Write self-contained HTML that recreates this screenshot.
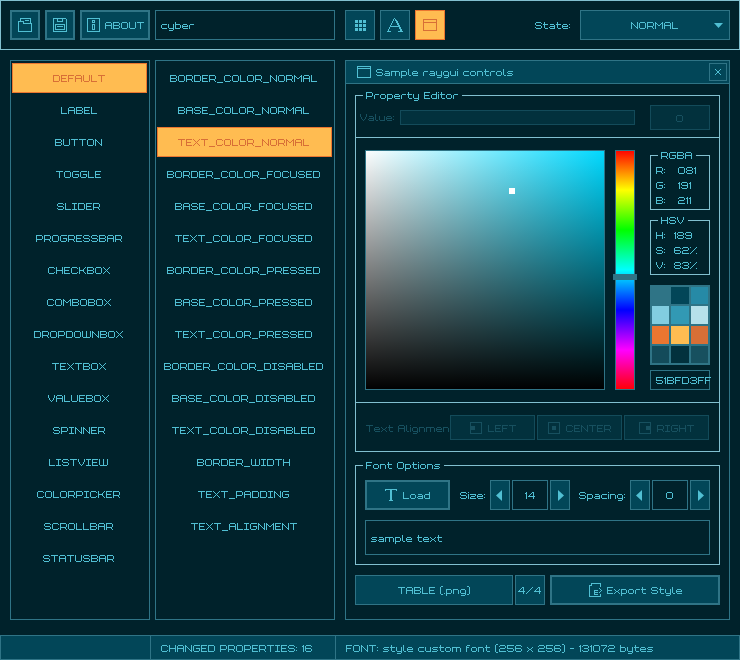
<!DOCTYPE html>
<html><head><meta charset="utf-8"><style>
html,body{margin:0;padding:0;width:740px;height:660px;overflow:hidden;background:#00222b}
div,span{position:absolute;box-sizing:border-box}
</style></head><body>
<div style="left:0px;top:0px;width:740px;height:50px;border:1px solid #81c0d0;background:#00222b;"></div>
<div style="left:10px;top:10px;width:30px;height:30px;border:2px solid #2f7486;background:#024658;"></div>
<div style="left:45px;top:10px;width:30px;height:30px;border:2px solid #2f7486;background:#024658;"></div>
<div style="left:80px;top:10px;width:70px;height:30px;border:2px solid #2f7486;background:#024658;"></div>
<div style="left:155px;top:10px;width:180px;height:30px;border:1px solid #2f7486;background:#00222b;"></div>
<div style="left:345px;top:10px;width:30px;height:30px;border:1px solid #2f7486;background:#024658;"></div>
<div style="left:380px;top:10px;width:30px;height:30px;border:1px solid #2f7486;background:#024658;"></div>
<div style="left:415px;top:10px;width:30px;height:30px;border:1px solid #eb7630;background:#ffbc51;"></div>
<div style="left:580px;top:10px;width:150px;height:30px;border:1px solid #2f7486;background:#024658;"></div>
<div style="left:10px;top:60px;width:140px;height:560px;border:1px solid #2f7486;background:#00222b;"></div>
<div style="left:155px;top:60px;width:180px;height:560px;border:1px solid #2f7486;background:#00222b;"></div>
<div style="left:12px;top:63px;width:135px;height:30px;border:1px solid #eb7630;background:#ffbc51;"></div>
<div style="left:157px;top:127px;width:175px;height:30px;border:1px solid #eb7630;background:#ffbc51;"></div>
<div style="left:345px;top:60px;width:385px;height:560px;border:1px solid #2f7486;background:#00222b;"></div>
<div style="left:345px;top:60px;width:385px;height:24px;border:1px solid #2f7486;background:#024658;"></div>
<div style="left:709px;top:63px;width:18px;height:18px;border:1px solid #2f7486;background:#024658;"></div>
<div style="left:355px;top:95px;width:8px;height:1px;background:#81c0d0"></div>
<div style="left:462px;top:95px;width:258px;height:1px;background:#81c0d0"></div>
<div style="left:355px;top:95px;width:1px;height:357px;background:#81c0d0"></div>
<div style="left:719px;top:95px;width:1px;height:357px;background:#81c0d0"></div>
<div style="left:355px;top:451px;width:365px;height:1px;background:#81c0d0"></div>
<div style="left:400px;top:110px;width:235px;height:15px;border:1px solid #134b5a;background:#02313d;"></div>
<div style="left:650px;top:105px;width:60px;height:25px;border:1px solid #134b5a;background:#02313d;"></div>
<div style="left:355px;top:137px;width:365px;height:1px;background:#81c0d0"></div>
<div style="left:365px;top:150px;width:240px;height:240px;background:linear-gradient(to bottom,rgba(0,0,0,0),#000),linear-gradient(to right,#fff,rgb(0,217,255))"></div>
<div style="left:365px;top:150px;width:240px;height:240px;border:1px solid #2f7486;background:transparent;"></div>
<div style="left:509px;top:188px;width:6px;height:6px;background:#fff"></div>
<div style="left:615px;top:150px;width:20px;height:240px;background:linear-gradient(to bottom,#f00,#ff0 16.667%,#0f0 33.333%,#0ff 50%,#00f 66.667%,#f0f 83.333%,#f00)"></div>
<div style="left:615px;top:150px;width:20px;height:240px;border:1px solid #2f7486;background:transparent;"></div>
<div style="left:613px;top:274px;width:24px;height:6px;background:#2f7486"></div>
<div style="left:650px;top:155px;width:8px;height:1px;background:#81c0d0"></div>
<div style="left:696px;top:155px;width:14px;height:1px;background:#81c0d0"></div>
<div style="left:650px;top:155px;width:1px;height:55px;background:#81c0d0"></div>
<div style="left:709px;top:155px;width:1px;height:55px;background:#81c0d0"></div>
<div style="left:650px;top:209px;width:60px;height:1px;background:#81c0d0"></div>
<div style="left:650px;top:220px;width:8px;height:1px;background:#81c0d0"></div>
<div style="left:688px;top:220px;width:22px;height:1px;background:#81c0d0"></div>
<div style="left:650px;top:220px;width:1px;height:55px;background:#81c0d0"></div>
<div style="left:709px;top:220px;width:1px;height:55px;background:#81c0d0"></div>
<div style="left:650px;top:274px;width:60px;height:1px;background:#81c0d0"></div>
<div style="left:650px;top:285px;width:60px;height:80px;background:#2f7486"></div>
<div style="left:652px;top:287px;width:17px;height:17px;background:#2f7486"></div>
<div style="left:671px;top:287px;width:18px;height:17px;background:#024658"></div>
<div style="left:691px;top:287px;width:17px;height:17px;background:#268aa6"></div>
<div style="left:652px;top:306px;width:17px;height:18px;background:#82cde0"></div>
<div style="left:671px;top:306px;width:18px;height:18px;background:#3299b4"></div>
<div style="left:691px;top:306px;width:17px;height:18px;background:#b6e1ea"></div>
<div style="left:652px;top:326px;width:17px;height:18px;background:#eb7630"></div>
<div style="left:671px;top:326px;width:18px;height:18px;background:#ffbc51"></div>
<div style="left:691px;top:326px;width:17px;height:18px;background:#d86f36"></div>
<div style="left:652px;top:346px;width:17px;height:17px;background:#134b5a"></div>
<div style="left:671px;top:346px;width:18px;height:17px;background:#02313d"></div>
<div style="left:691px;top:346px;width:17px;height:17px;background:#17505f"></div>
<div style="left:650px;top:370px;width:60px;height:20px;border:1px solid #2f7486;background:#00222b;"></div>
<div style="left:355px;top:402px;width:365px;height:1px;background:#81c0d0"></div>
<div style="left:450px;top:415px;width:85px;height:25px;border:1px solid #134b5a;background:#02313d;"></div>
<div style="left:537px;top:415px;width:85px;height:25px;border:1px solid #134b5a;background:#02313d;"></div>
<div style="left:624px;top:415px;width:85px;height:25px;border:1px solid #134b5a;background:#02313d;"></div>
<div style="left:355px;top:465px;width:8px;height:1px;background:#81c0d0"></div>
<div style="left:444px;top:465px;width:276px;height:1px;background:#81c0d0"></div>
<div style="left:355px;top:465px;width:1px;height:100px;background:#81c0d0"></div>
<div style="left:719px;top:465px;width:1px;height:100px;background:#81c0d0"></div>
<div style="left:355px;top:564px;width:365px;height:1px;background:#81c0d0"></div>
<div style="left:365px;top:480px;width:85px;height:30px;border:2px solid #2f7486;background:#024658;"></div>
<div style="left:490px;top:480px;width:20px;height:30px;border:1px solid #2f7486;background:#024658;"></div>
<div style="left:512px;top:480px;width:36px;height:30px;border:1px solid #2f7486;background:#00222b;"></div>
<div style="left:550px;top:480px;width:20px;height:30px;border:1px solid #2f7486;background:#024658;"></div>
<div style="left:630px;top:480px;width:20px;height:30px;border:1px solid #2f7486;background:#024658;"></div>
<div style="left:652px;top:480px;width:36px;height:30px;border:1px solid #2f7486;background:#00222b;"></div>
<div style="left:690px;top:480px;width:20px;height:30px;border:1px solid #2f7486;background:#024658;"></div>
<div style="left:365px;top:520px;width:345px;height:35px;border:1px solid #2f7486;background:#00222b;"></div>
<div style="left:355px;top:575px;width:158px;height:30px;border:1px solid #2f7486;background:#024658;"></div>
<div style="left:515px;top:575px;width:30px;height:30px;border:1px solid #2f7486;background:#024658;"></div>
<div style="left:550px;top:575px;width:170px;height:30px;border:2px solid #2f7486;background:#024658;"></div>
<div style="left:0px;top:635px;width:151px;height:25px;border:1px solid #2f7486;background:#024658;"></div>
<div style="left:150px;top:635px;width:186px;height:25px;border:1px solid #2f7486;background:#024658;"></div>
<div style="left:335px;top:635px;width:405px;height:25px;border:1px solid #2f7486;background:#024658;"></div>
<svg style="position:absolute;left:10px;top:10px" width="30" height="30" viewBox="0 0 30 30" shape-rendering="crispEdges" fill="#51bfd3"><rect x="10" y="8" width="11" height="1"/><rect x="10" y="8" width="1" height="4"/><rect x="20" y="8" width="1" height="6"/><rect x="15" y="10" width="4" height="1"/><rect x="8" y="11" width="6" height="1"/><rect x="13" y="11" width="1" height="3"/><rect x="13" y="13" width="9" height="1"/><rect x="21" y="13" width="1" height="9"/><rect x="8" y="21" width="14" height="1"/><rect x="8" y="11" width="1" height="11"/></svg>
<svg style="position:absolute;left:45px;top:10px" width="30" height="30" viewBox="0 0 30 30" shape-rendering="crispEdges" fill="#51bfd3"><rect x="8" y="8" width="13" height="1"/><rect x="21" y="9" width="1" height="1"/><rect x="21" y="9" width="1" height="13"/><rect x="8" y="8" width="1" height="14"/><rect x="8" y="21" width="14" height="1"/><rect x="12" y="8" width="1" height="4"/><rect x="17" y="8" width="1" height="4"/><rect x="12" y="11" width="6" height="1"/><rect x="10" y="14" width="10" height="1"/><rect x="10" y="19" width="10" height="1"/><rect x="10" y="14" width="1" height="6"/><rect x="19" y="14" width="1" height="6"/><rect x="12" y="16" width="6" height="1"/></svg>
<svg style="position:absolute;left:80px;top:10px" width="30" height="30" viewBox="0 0 30 30" shape-rendering="crispEdges" fill="#51bfd3"><rect x="7" y="8" width="13" height="1"/><rect x="7" y="21" width="13" height="1"/><rect x="7" y="8" width="1" height="14"/><rect x="19" y="8" width="1" height="14"/><rect x="12" y="10" width="3" height="1"/><rect x="12" y="12" width="3" height="1"/><rect x="12" y="10" width="1" height="3"/><rect x="14" y="10" width="1" height="3"/><rect x="12" y="14" width="3" height="1"/><rect x="12" y="19" width="3" height="1"/><rect x="12" y="14" width="1" height="6"/><rect x="14" y="14" width="1" height="6"/></svg>
<svg style="position:absolute;left:345px;top:10px" width="30" height="30" viewBox="0 0 30 30" shape-rendering="crispEdges" fill="#51bfd3"><rect x="10" y="10" width="3" height="3"/><rect x="10" y="14" width="3" height="3"/><rect x="10" y="18" width="3" height="3"/><rect x="14" y="10" width="3" height="3"/><rect x="14" y="14" width="3" height="3"/><rect x="14" y="18" width="3" height="3"/><rect x="18" y="10" width="3" height="3"/><rect x="18" y="14" width="3" height="3"/><rect x="18" y="18" width="3" height="3"/></svg>
<svg style="position:absolute;left:380px;top:10px" width="30" height="30" viewBox="0 0 30 30" shape-rendering="crispEdges" fill="#51bfd3"><rect x="14" y="8" width="1" height="1"/><rect x="14" y="8" width="1" height="1"/><rect x="13" y="9" width="1" height="1"/><rect x="15" y="9" width="1" height="1"/><rect x="13" y="10" width="1" height="1"/><rect x="15" y="10" width="2" height="1"/><rect x="12" y="11" width="1" height="1"/><rect x="16" y="11" width="2" height="1"/><rect x="12" y="12" width="1" height="1"/><rect x="16" y="12" width="2" height="1"/><rect x="11" y="13" width="1" height="1"/><rect x="17" y="13" width="2" height="1"/><rect x="11" y="14" width="1" height="1"/><rect x="17" y="14" width="2" height="1"/><rect x="10" y="15" width="1" height="1"/><rect x="18" y="15" width="2" height="1"/><rect x="10" y="16" width="1" height="1"/><rect x="18" y="16" width="2" height="1"/><rect x="9" y="17" width="1" height="1"/><rect x="19" y="17" width="2" height="1"/><rect x="9" y="18" width="1" height="1"/><rect x="19" y="18" width="2" height="1"/><rect x="8" y="19" width="1" height="1"/><rect x="20" y="19" width="2" height="1"/><rect x="8" y="20" width="1" height="1"/><rect x="20" y="20" width="2" height="1"/><rect x="11" y="16" width="8" height="1"/><rect x="7" y="21" width="4" height="1"/><rect x="18" y="21" width="5" height="1"/></svg>
<svg style="position:absolute;left:415px;top:10px" width="30" height="30" viewBox="0 0 30 30" shape-rendering="crispEdges" fill="#d86f36"><rect x="8" y="9" width="14" height="1"/><rect x="8" y="20" width="14" height="1"/><rect x="8" y="9" width="1" height="12"/><rect x="21" y="9" width="1" height="12"/><rect x="8" y="12" width="14" height="1"/></svg>
<svg style="position:absolute;left:345px;top:60px" width="40" height="24" viewBox="0 0 40 24" shape-rendering="crispEdges" fill="#51bfd3"><rect x="12" y="6" width="14" height="1"/><rect x="12" y="17" width="14" height="1"/><rect x="12" y="6" width="1" height="12"/><rect x="25" y="6" width="1" height="12"/><rect x="12" y="8" width="14" height="1"/></svg>
<svg style="position:absolute;left:700px;top:10px" width="30" height="30" viewBox="0 0 30 30" fill="#51bfd3"><polygon points="14,13 23,13 18.5,18"/></svg>
<svg style="position:absolute;left:709px;top:63px" width="18" height="18" viewBox="0 0 18 18" fill="#51bfd3" shape-rendering="crispEdges"><rect x="6" y="6" width="1" height="1"/><rect x="11" y="6" width="1" height="1"/><rect x="7" y="7" width="1" height="1"/><rect x="10" y="7" width="1" height="1"/><rect x="8" y="8" width="1" height="1"/><rect x="9" y="8" width="1" height="1"/><rect x="9" y="9" width="1" height="1"/><rect x="8" y="9" width="1" height="1"/><rect x="10" y="10" width="1" height="1"/><rect x="7" y="10" width="1" height="1"/><rect x="11" y="11" width="1" height="1"/><rect x="6" y="11" width="1" height="1"/></svg>
<svg style="position:absolute;left:490px;top:480px" width="20" height="30" viewBox="0 0 20 30" fill="#51bfd3"><polygon points="6,15.5 12,10 12,21"/></svg>
<svg style="position:absolute;left:630px;top:480px" width="20" height="30" viewBox="0 0 20 30" fill="#51bfd3"><polygon points="6,15.5 12,10 12,21"/></svg>
<svg style="position:absolute;left:550px;top:480px" width="20" height="30" viewBox="0 0 20 30" fill="#51bfd3"><polygon points="14,15.5 8,10 8,21"/></svg>
<svg style="position:absolute;left:690px;top:480px" width="20" height="30" viewBox="0 0 20 30" fill="#51bfd3"><polygon points="14,15.5 8,10 8,21"/></svg>
<svg style="position:absolute;left:365px;top:480px" width="40" height="30" viewBox="0 0 40 30" fill="#51bfd3" shape-rendering="crispEdges"><rect x="20" y="9" width="12" height="1"/><rect x="20" y="10" width="1" height="1"/><rect x="31" y="10" width="1" height="1"/><rect x="25" y="10" width="2" height="10"/><rect x="24" y="20" width="4" height="1"/></svg>
<svg style="position:absolute;left:580px;top:575px" width="30" height="30" viewBox="0 0 30 30" shape-rendering="crispEdges" fill="#51bfd3"><rect x="11" y="8" width="10" height="1"/><rect x="11" y="9" width="1" height="1"/><rect x="9" y="10" width="3" height="1"/><rect x="9" y="10" width="1" height="12"/><rect x="9" y="21" width="12" height="1"/><rect x="20" y="8" width="1" height="4"/><rect x="20" y="19" width="1" height="3"/><rect x="14" y="15" width="4" height="1"/><rect x="14" y="17" width="4" height="1"/><rect x="14" y="19" width="4" height="1"/><rect x="14" y="15" width="1" height="5"/><rect x="19" y="13" width="1" height="1"/><rect x="20" y="14" width="1" height="1"/><rect x="21" y="15" width="1" height="1"/><rect x="20" y="16" width="1" height="1"/><rect x="19" y="17" width="1" height="1"/></svg>
<svg style="position:absolute;left:470px;top:422px" width="12" height="12" viewBox="0 0 12 12" fill="#17505f" shape-rendering="crispEdges"><rect x="0" y="0" width="12" height="1"/><rect x="0" y="11" width="12" height="1"/><rect x="0" y="0" width="1" height="12"/><rect x="11" y="0" width="1" height="12"/><rect x="1" y="4" width="4" height="4"/></svg>
<svg style="position:absolute;left:548px;top:422px" width="12" height="12" viewBox="0 0 12 12" fill="#17505f" shape-rendering="crispEdges"><rect x="0" y="0" width="12" height="1"/><rect x="0" y="11" width="12" height="1"/><rect x="0" y="0" width="1" height="12"/><rect x="11" y="0" width="1" height="12"/><rect x="4" y="4" width="4" height="4"/></svg>
<svg style="position:absolute;left:639px;top:422px" width="12" height="12" viewBox="0 0 12 12" fill="#17505f" shape-rendering="crispEdges"><rect x="0" y="0" width="12" height="1"/><rect x="0" y="11" width="12" height="1"/><rect x="0" y="0" width="1" height="12"/><rect x="11" y="0" width="1" height="12"/><rect x="7" y="4" width="4" height="4"/></svg>
<svg style="position:absolute;left:0;top:0" width="740" height="660" viewBox="0 0 740 660" shape-rendering="crispEdges"><defs><path id="g37" d="M0 0h1v1h-1zM6 0h1v1h-1zM5 1h1v1h-1zM4 2h1v1h-1zM3 3h1v1h-1zM2 4h1v1h-1zM1 5h1v1h-1zM0 6h1v1h-1zM6 6h1v1h-1z"/><path id="g40" d="M1 -1h2v1h-2zM0 0h1v1h-1zM0 1h1v1h-1zM0 2h1v1h-1zM0 3h1v1h-1zM0 4h1v1h-1zM0 5h1v1h-1zM0 6h1v1h-1zM1 7h2v1h-2z"/><path id="g41" d="M0 -1h2v1h-2zM2 0h1v1h-1zM2 1h1v1h-1zM2 2h1v1h-1zM2 3h1v1h-1zM2 4h1v1h-1zM2 5h1v1h-1zM2 6h1v1h-1zM0 7h2v1h-2z"/><path id="g45" d="M0 3h4v1h-4z"/><path id="g46" d="M0 6h1v1h-1z"/><path id="g47" d="M6 0h1v1h-1zM5 1h1v1h-1zM4 2h1v1h-1zM3 3h1v1h-1zM2 4h1v1h-1zM1 5h1v1h-1zM0 6h1v1h-1z"/><path id="g48" d="M1 0h5v1h-5zM0 1h1v1h-1zM6 1h1v1h-1zM0 2h1v1h-1zM6 2h1v1h-1zM0 3h1v1h-1zM6 3h1v1h-1zM0 4h1v1h-1zM6 4h1v1h-1zM0 5h1v1h-1zM6 5h1v1h-1zM1 6h5v1h-5z"/><path id="g49" d="M1 0h1v1h-1zM0 1h2v1h-2zM1 2h1v1h-1zM1 3h1v1h-1zM1 4h1v1h-1zM1 5h1v1h-1zM1 6h1v1h-1z"/><path id="g50" d="M1 0h5v1h-5zM0 1h1v1h-1zM6 1h1v1h-1zM6 2h1v1h-1zM1 3h5v1h-5zM0 4h1v1h-1zM0 5h1v1h-1zM0 6h7v1h-7z"/><path id="g51" d="M1 0h5v1h-5zM0 1h1v1h-1zM6 1h1v1h-1zM6 2h1v1h-1zM2 3h4v1h-4zM6 4h1v1h-1zM0 5h1v1h-1zM6 5h1v1h-1zM1 6h5v1h-5z"/><path id="g52" d="M4 0h2v1h-2zM3 1h1v1h-1zM5 1h1v1h-1zM2 2h1v1h-1zM5 2h1v1h-1zM1 3h1v1h-1zM5 3h1v1h-1zM0 4h7v1h-7zM5 5h1v1h-1zM5 6h1v1h-1z"/><path id="g53" d="M0 0h7v1h-7zM0 1h1v1h-1zM0 2h1v1h-1zM0 3h6v1h-6zM6 4h1v1h-1zM0 5h1v1h-1zM6 5h1v1h-1zM1 6h5v1h-5z"/><path id="g54" d="M1 0h5v1h-5zM0 1h1v1h-1zM6 1h1v1h-1zM0 2h1v1h-1zM0 3h6v1h-6zM0 4h1v1h-1zM6 4h1v1h-1zM0 5h1v1h-1zM6 5h1v1h-1zM1 6h5v1h-5z"/><path id="g55" d="M0 0h6v1h-6zM5 1h1v1h-1zM4 2h1v1h-1zM3 3h1v1h-1zM2 4h1v1h-1zM2 5h1v1h-1zM2 6h1v1h-1z"/><path id="g56" d="M1 0h5v1h-5zM0 1h1v1h-1zM6 1h1v1h-1zM0 2h1v1h-1zM6 2h1v1h-1zM1 3h5v1h-5zM0 4h1v1h-1zM6 4h1v1h-1zM0 5h1v1h-1zM6 5h1v1h-1zM1 6h5v1h-5z"/><path id="g57" d="M1 0h5v1h-5zM0 1h1v1h-1zM6 1h1v1h-1zM0 2h1v1h-1zM6 2h1v1h-1zM1 3h6v1h-6zM6 4h1v1h-1zM0 5h1v1h-1zM6 5h1v1h-1zM1 6h5v1h-5z"/><path id="g58" d="M0 2h1v1h-1zM0 5h1v1h-1z"/><path id="g65" d="M1 0h5v1h-5zM0 1h1v1h-1zM6 1h1v1h-1zM0 2h1v1h-1zM6 2h1v1h-1zM0 3h7v1h-7zM0 4h1v1h-1zM6 4h1v1h-1zM0 5h1v1h-1zM6 5h1v1h-1zM0 6h1v1h-1zM6 6h1v1h-1z"/><path id="g66" d="M0 0h6v1h-6zM0 1h1v1h-1zM6 1h1v1h-1zM0 2h1v1h-1zM6 2h1v1h-1zM0 3h6v1h-6zM0 4h1v1h-1zM6 4h1v1h-1zM0 5h1v1h-1zM6 5h1v1h-1zM0 6h6v1h-6z"/><path id="g67" d="M1 0h5v1h-5zM0 1h1v1h-1zM6 1h1v1h-1zM0 2h1v1h-1zM0 3h1v1h-1zM0 4h1v1h-1zM0 5h1v1h-1zM6 5h1v1h-1zM1 6h5v1h-5z"/><path id="g68" d="M0 0h6v1h-6zM0 1h1v1h-1zM6 1h1v1h-1zM0 2h1v1h-1zM6 2h1v1h-1zM0 3h1v1h-1zM6 3h1v1h-1zM0 4h1v1h-1zM6 4h1v1h-1zM0 5h1v1h-1zM6 5h1v1h-1zM0 6h6v1h-6z"/><path id="g69" d="M0 0h6v1h-6zM0 1h1v1h-1zM0 2h1v1h-1zM0 3h5v1h-5zM0 4h1v1h-1zM0 5h1v1h-1zM0 6h6v1h-6z"/><path id="g70" d="M0 0h6v1h-6zM0 1h1v1h-1zM0 2h1v1h-1zM0 3h5v1h-5zM0 4h1v1h-1zM0 5h1v1h-1zM0 6h1v1h-1z"/><path id="g71" d="M1 0h6v1h-6zM0 1h1v1h-1zM0 2h1v1h-1zM0 3h1v1h-1zM3 3h4v1h-4zM0 4h1v1h-1zM6 4h1v1h-1zM0 5h1v1h-1zM6 5h1v1h-1zM1 6h5v1h-5z"/><path id="g72" d="M0 0h1v1h-1zM6 0h1v1h-1zM0 1h1v1h-1zM6 1h1v1h-1zM0 2h1v1h-1zM6 2h1v1h-1zM0 3h7v1h-7zM0 4h1v1h-1zM6 4h1v1h-1zM0 5h1v1h-1zM6 5h1v1h-1zM0 6h1v1h-1zM6 6h1v1h-1z"/><path id="g73" d="M0 0h5v1h-5zM2 1h1v1h-1zM2 2h1v1h-1zM2 3h1v1h-1zM2 4h1v1h-1zM2 5h1v1h-1zM0 6h5v1h-5z"/><path id="g75" d="M0 0h1v1h-1zM6 0h1v1h-1zM0 1h1v1h-1zM5 1h1v1h-1zM0 2h1v1h-1zM4 2h1v1h-1zM0 3h5v1h-5zM0 4h1v1h-1zM4 4h1v1h-1zM0 5h1v1h-1zM5 5h1v1h-1zM0 6h1v1h-1zM6 6h1v1h-1z"/><path id="g76" d="M0 0h1v1h-1zM0 1h1v1h-1zM0 2h1v1h-1zM0 3h1v1h-1zM0 4h1v1h-1zM0 5h1v1h-1zM0 6h6v1h-6z"/><path id="g77" d="M0 0h1v1h-1zM7 0h1v1h-1zM0 1h2v1h-2zM6 1h2v1h-2zM0 2h1v1h-1zM2 2h1v1h-1zM5 2h1v1h-1zM7 2h1v1h-1zM0 3h1v1h-1zM3 3h2v1h-2zM7 3h1v1h-1zM0 4h1v1h-1zM7 4h1v1h-1zM0 5h1v1h-1zM7 5h1v1h-1zM0 6h1v1h-1zM7 6h1v1h-1z"/><path id="g78" d="M0 0h1v1h-1zM6 0h1v1h-1zM0 1h2v1h-2zM6 1h1v1h-1zM0 2h1v1h-1zM2 2h1v1h-1zM6 2h1v1h-1zM0 3h1v1h-1zM3 3h1v1h-1zM6 3h1v1h-1zM0 4h1v1h-1zM4 4h1v1h-1zM6 4h1v1h-1zM0 5h1v1h-1zM5 5h2v1h-2zM0 6h1v1h-1zM6 6h1v1h-1z"/><path id="g79" d="M1 0h5v1h-5zM0 1h1v1h-1zM6 1h1v1h-1zM0 2h1v1h-1zM6 2h1v1h-1zM0 3h1v1h-1zM6 3h1v1h-1zM0 4h1v1h-1zM6 4h1v1h-1zM0 5h1v1h-1zM6 5h1v1h-1zM1 6h5v1h-5z"/><path id="g80" d="M0 0h6v1h-6zM0 1h1v1h-1zM6 1h1v1h-1zM0 2h1v1h-1zM6 2h1v1h-1zM0 3h1v1h-1zM6 3h1v1h-1zM0 4h6v1h-6zM0 5h1v1h-1zM0 6h1v1h-1z"/><path id="g82" d="M0 0h6v1h-6zM0 1h1v1h-1zM6 1h1v1h-1zM0 2h1v1h-1zM6 2h1v1h-1zM0 3h1v1h-1zM6 3h1v1h-1zM0 4h6v1h-6zM0 5h1v1h-1zM5 5h1v1h-1zM0 6h1v1h-1zM6 6h1v1h-1z"/><path id="g83" d="M1 0h5v1h-5zM0 1h1v1h-1zM6 1h1v1h-1zM0 2h1v1h-1zM1 3h5v1h-5zM6 4h1v1h-1zM0 5h1v1h-1zM6 5h1v1h-1zM1 6h5v1h-5z"/><path id="g84" d="M0 0h7v1h-7zM3 1h1v1h-1zM3 2h1v1h-1zM3 3h1v1h-1zM3 4h1v1h-1zM3 5h1v1h-1zM3 6h1v1h-1z"/><path id="g85" d="M0 0h1v1h-1zM6 0h1v1h-1zM0 1h1v1h-1zM6 1h1v1h-1zM0 2h1v1h-1zM6 2h1v1h-1zM0 3h1v1h-1zM6 3h1v1h-1zM0 4h1v1h-1zM6 4h1v1h-1zM0 5h1v1h-1zM6 5h1v1h-1zM1 6h5v1h-5z"/><path id="g86" d="M0 0h1v1h-1zM6 0h1v1h-1zM0 1h1v1h-1zM6 1h1v1h-1zM0 2h1v1h-1zM6 2h1v1h-1zM1 3h1v1h-1zM5 3h1v1h-1zM1 4h1v1h-1zM5 4h1v1h-1zM2 5h1v1h-1zM4 5h1v1h-1zM3 6h1v1h-1z"/><path id="g87" d="M0 0h1v1h-1zM4 0h1v1h-1zM8 0h1v1h-1zM0 1h1v1h-1zM4 1h1v1h-1zM8 1h1v1h-1zM0 2h1v1h-1zM4 2h1v1h-1zM8 2h1v1h-1zM0 3h1v1h-1zM4 3h1v1h-1zM8 3h1v1h-1zM0 4h1v1h-1zM4 4h1v1h-1zM8 4h1v1h-1zM0 5h1v1h-1zM4 5h1v1h-1zM8 5h1v1h-1zM1 6h7v1h-7z"/><path id="g88" d="M0 0h1v1h-1zM6 0h1v1h-1zM1 1h1v1h-1zM5 1h1v1h-1zM2 2h1v1h-1zM4 2h1v1h-1zM3 3h1v1h-1zM2 4h1v1h-1zM4 4h1v1h-1zM1 5h1v1h-1zM5 5h1v1h-1zM0 6h1v1h-1zM6 6h1v1h-1z"/><path id="g95" d="M0 7h6v1h-6z"/><path id="g97" d="M1 2h4v1h-4zM5 3h1v1h-1zM1 4h5v1h-5zM0 5h1v1h-1zM5 5h1v1h-1zM1 6h5v1h-5z"/><path id="g98" d="M0 0h1v1h-1zM0 1h1v1h-1zM0 2h5v1h-5zM0 3h1v1h-1zM5 3h1v1h-1zM0 4h1v1h-1zM5 4h1v1h-1zM0 5h1v1h-1zM5 5h1v1h-1zM0 6h5v1h-5z"/><path id="g99" d="M1 2h5v1h-5zM0 3h1v1h-1zM0 4h1v1h-1zM0 5h1v1h-1zM1 6h5v1h-5z"/><path id="g100" d="M5 0h1v1h-1zM5 1h1v1h-1zM1 2h5v1h-5zM0 3h1v1h-1zM5 3h1v1h-1zM0 4h1v1h-1zM5 4h1v1h-1zM0 5h1v1h-1zM5 5h1v1h-1zM1 6h5v1h-5z"/><path id="g101" d="M1 2h4v1h-4zM0 3h1v1h-1zM5 3h1v1h-1zM0 4h6v1h-6zM0 5h1v1h-1zM1 6h5v1h-5z"/><path id="g102" d="M1 0h3v1h-3zM0 1h1v1h-1zM0 2h3v1h-3zM0 3h1v1h-1zM0 4h1v1h-1zM0 5h1v1h-1zM0 6h1v1h-1z"/><path id="g103" d="M1 2h4v1h-4zM0 3h1v1h-1zM5 3h1v1h-1zM0 4h1v1h-1zM5 4h1v1h-1zM0 5h1v1h-1zM5 5h1v1h-1zM1 6h5v1h-5zM5 7h1v1h-1zM1 8h4v1h-4z"/><path id="g105" d="M0 0h1v1h-1zM0 2h1v1h-1zM0 3h1v1h-1zM0 4h1v1h-1zM0 5h1v1h-1zM0 6h1v1h-1z"/><path id="g108" d="M0 0h1v1h-1zM0 1h1v1h-1zM0 2h1v1h-1zM0 3h1v1h-1zM0 4h1v1h-1zM0 5h1v1h-1zM1 6h2v1h-2z"/><path id="g109" d="M0 2h8v1h-8zM0 3h1v1h-1zM4 3h1v1h-1zM8 3h1v1h-1zM0 4h1v1h-1zM4 4h1v1h-1zM8 4h1v1h-1zM0 5h1v1h-1zM4 5h1v1h-1zM8 5h1v1h-1zM0 6h1v1h-1zM4 6h1v1h-1zM8 6h1v1h-1z"/><path id="g110" d="M0 2h5v1h-5zM0 3h1v1h-1zM5 3h1v1h-1zM0 4h1v1h-1zM5 4h1v1h-1zM0 5h1v1h-1zM5 5h1v1h-1zM0 6h1v1h-1zM5 6h1v1h-1z"/><path id="g111" d="M1 2h4v1h-4zM0 3h1v1h-1zM5 3h1v1h-1zM0 4h1v1h-1zM5 4h1v1h-1zM0 5h1v1h-1zM5 5h1v1h-1zM1 6h4v1h-4z"/><path id="g112" d="M0 2h5v1h-5zM0 3h1v1h-1zM5 3h1v1h-1zM0 4h1v1h-1zM5 4h1v1h-1zM0 5h1v1h-1zM5 5h1v1h-1zM0 6h5v1h-5zM0 7h1v1h-1zM0 8h1v1h-1z"/><path id="g114" d="M1 2h4v1h-4zM0 3h1v1h-1zM0 4h1v1h-1zM0 5h1v1h-1zM0 6h1v1h-1z"/><path id="g115" d="M1 2h5v1h-5zM0 3h1v1h-1zM1 4h4v1h-4zM5 5h1v1h-1zM0 6h5v1h-5z"/><path id="g116" d="M1 0h1v1h-1zM1 1h1v1h-1zM0 2h5v1h-5zM1 3h1v1h-1zM1 4h1v1h-1zM1 5h1v1h-1zM2 6h3v1h-3z"/><path id="g117" d="M0 2h1v1h-1zM5 2h1v1h-1zM0 3h1v1h-1zM5 3h1v1h-1zM0 4h1v1h-1zM5 4h1v1h-1zM0 5h1v1h-1zM5 5h1v1h-1zM1 6h5v1h-5z"/><path id="g120" d="M0 2h1v1h-1zM5 2h1v1h-1zM1 3h1v1h-1zM4 3h1v1h-1zM2 4h2v1h-2zM1 5h1v1h-1zM4 5h1v1h-1zM0 6h1v1h-1zM5 6h1v1h-1z"/><path id="g121" d="M0 2h1v1h-1zM5 2h1v1h-1zM0 3h1v1h-1zM5 3h1v1h-1zM0 4h1v1h-1zM5 4h1v1h-1zM0 5h1v1h-1zM5 5h1v1h-1zM1 6h5v1h-5zM5 7h1v1h-1zM1 8h4v1h-4z"/><path id="g122" d="M0 2h6v1h-6zM5 3h1v1h-1zM1 4h4v1h-4zM0 5h1v1h-1zM0 6h6v1h-6z"/><clipPath id="clipTA"><rect x="355" y="410" width="95" height="30"/></clipPath></defs><g fill="#51bfd3"><use href="#g65" x="105" y="22"/><use href="#g66" x="113" y="22"/><use href="#g79" x="121" y="22"/><use href="#g85" x="129" y="22"/><use href="#g84" x="137" y="22"/></g><g fill="#51bfd3"><use href="#g99" x="161" y="22"/><use href="#g121" x="168" y="22"/><use href="#g98" x="175" y="22"/><use href="#g101" x="182" y="22"/><use href="#g114" x="189" y="22"/></g><g fill="#51bfd3"><use href="#g83" x="535" y="22"/><use href="#g116" x="543" y="22"/><use href="#g97" x="549" y="22"/><use href="#g116" x="556" y="22"/><use href="#g101" x="562" y="22"/><use href="#g58" x="569" y="22"/></g><g fill="#51bfd3"><use href="#g78" x="631" y="22"/><use href="#g79" x="639" y="22"/><use href="#g82" x="647" y="22"/><use href="#g77" x="655" y="22"/><use href="#g65" x="664" y="22"/><use href="#g76" x="672" y="22"/></g><g fill="#d86f36"><use href="#g68" x="53" y="75"/><use href="#g69" x="61" y="75"/><use href="#g70" x="68" y="75"/><use href="#g65" x="75" y="75"/><use href="#g85" x="83" y="75"/><use href="#g76" x="91" y="75"/><use href="#g84" x="98" y="75"/></g><g fill="#51bfd3"><use href="#g76" x="61" y="107"/><use href="#g65" x="68" y="107"/><use href="#g66" x="76" y="107"/><use href="#g69" x="84" y="107"/><use href="#g76" x="91" y="107"/></g><g fill="#51bfd3"><use href="#g66" x="55" y="139"/><use href="#g85" x="63" y="139"/><use href="#g84" x="71" y="139"/><use href="#g84" x="79" y="139"/><use href="#g79" x="87" y="139"/><use href="#g78" x="95" y="139"/></g><g fill="#51bfd3"><use href="#g84" x="56" y="171"/><use href="#g79" x="64" y="171"/><use href="#g71" x="72" y="171"/><use href="#g71" x="80" y="171"/><use href="#g76" x="88" y="171"/><use href="#g69" x="95" y="171"/></g><g fill="#51bfd3"><use href="#g83" x="57" y="203"/><use href="#g76" x="65" y="203"/><use href="#g73" x="72" y="203"/><use href="#g68" x="78" y="203"/><use href="#g69" x="86" y="203"/><use href="#g82" x="93" y="203"/></g><g fill="#51bfd3"><use href="#g80" x="36" y="235"/><use href="#g82" x="44" y="235"/><use href="#g79" x="52" y="235"/><use href="#g71" x="60" y="235"/><use href="#g82" x="68" y="235"/><use href="#g69" x="76" y="235"/><use href="#g83" x="83" y="235"/><use href="#g83" x="91" y="235"/><use href="#g66" x="99" y="235"/><use href="#g65" x="107" y="235"/><use href="#g82" x="115" y="235"/></g><g fill="#51bfd3"><use href="#g67" x="48" y="267"/><use href="#g72" x="56" y="267"/><use href="#g69" x="64" y="267"/><use href="#g67" x="71" y="267"/><use href="#g75" x="79" y="267"/><use href="#g66" x="87" y="267"/><use href="#g79" x="95" y="267"/><use href="#g88" x="103" y="267"/></g><g fill="#51bfd3"><use href="#g67" x="47" y="299"/><use href="#g79" x="55" y="299"/><use href="#g77" x="63" y="299"/><use href="#g66" x="72" y="299"/><use href="#g79" x="80" y="299"/><use href="#g66" x="88" y="299"/><use href="#g79" x="96" y="299"/><use href="#g88" x="104" y="299"/></g><g fill="#51bfd3"><use href="#g68" x="34" y="331"/><use href="#g82" x="42" y="331"/><use href="#g79" x="50" y="331"/><use href="#g80" x="58" y="331"/><use href="#g68" x="66" y="331"/><use href="#g79" x="74" y="331"/><use href="#g87" x="82" y="331"/><use href="#g78" x="92" y="331"/><use href="#g66" x="100" y="331"/><use href="#g79" x="108" y="331"/><use href="#g88" x="116" y="331"/></g><g fill="#51bfd3"><use href="#g84" x="52" y="363"/><use href="#g69" x="60" y="363"/><use href="#g88" x="67" y="363"/><use href="#g84" x="75" y="363"/><use href="#g66" x="83" y="363"/><use href="#g79" x="91" y="363"/><use href="#g88" x="99" y="363"/></g><g fill="#51bfd3"><use href="#g86" x="48" y="395"/><use href="#g65" x="56" y="395"/><use href="#g76" x="64" y="395"/><use href="#g85" x="71" y="395"/><use href="#g69" x="79" y="395"/><use href="#g66" x="86" y="395"/><use href="#g79" x="94" y="395"/><use href="#g88" x="102" y="395"/></g><g fill="#51bfd3"><use href="#g83" x="53" y="427"/><use href="#g80" x="61" y="427"/><use href="#g73" x="69" y="427"/><use href="#g78" x="75" y="427"/><use href="#g78" x="83" y="427"/><use href="#g69" x="91" y="427"/><use href="#g82" x="98" y="427"/></g><g fill="#51bfd3"><use href="#g76" x="49" y="459"/><use href="#g73" x="56" y="459"/><use href="#g83" x="62" y="459"/><use href="#g84" x="70" y="459"/><use href="#g86" x="78" y="459"/><use href="#g73" x="86" y="459"/><use href="#g69" x="92" y="459"/><use href="#g87" x="99" y="459"/></g><g fill="#51bfd3"><use href="#g67" x="37" y="491"/><use href="#g79" x="45" y="491"/><use href="#g76" x="53" y="491"/><use href="#g79" x="60" y="491"/><use href="#g82" x="68" y="491"/><use href="#g80" x="76" y="491"/><use href="#g73" x="84" y="491"/><use href="#g67" x="90" y="491"/><use href="#g75" x="98" y="491"/><use href="#g69" x="106" y="491"/><use href="#g82" x="113" y="491"/></g><g fill="#51bfd3"><use href="#g83" x="44" y="523"/><use href="#g67" x="52" y="523"/><use href="#g82" x="60" y="523"/><use href="#g79" x="68" y="523"/><use href="#g76" x="76" y="523"/><use href="#g76" x="83" y="523"/><use href="#g66" x="90" y="523"/><use href="#g65" x="98" y="523"/><use href="#g82" x="106" y="523"/></g><g fill="#51bfd3"><use href="#g83" x="43" y="555"/><use href="#g84" x="51" y="555"/><use href="#g65" x="59" y="555"/><use href="#g84" x="67" y="555"/><use href="#g85" x="75" y="555"/><use href="#g83" x="83" y="555"/><use href="#g66" x="91" y="555"/><use href="#g65" x="99" y="555"/><use href="#g82" x="107" y="555"/></g><g fill="#51bfd3"><use href="#g66" x="170" y="75"/><use href="#g79" x="178" y="75"/><use href="#g82" x="186" y="75"/><use href="#g68" x="194" y="75"/><use href="#g69" x="202" y="75"/><use href="#g82" x="209" y="75"/><use href="#g95" x="217" y="75"/><use href="#g67" x="224" y="75"/><use href="#g79" x="232" y="75"/><use href="#g76" x="240" y="75"/><use href="#g79" x="247" y="75"/><use href="#g82" x="255" y="75"/><use href="#g95" x="263" y="75"/><use href="#g78" x="270" y="75"/><use href="#g79" x="278" y="75"/><use href="#g82" x="286" y="75"/><use href="#g77" x="294" y="75"/><use href="#g65" x="303" y="75"/><use href="#g76" x="311" y="75"/></g><g fill="#51bfd3"><use href="#g66" x="178" y="107"/><use href="#g65" x="186" y="107"/><use href="#g83" x="194" y="107"/><use href="#g69" x="202" y="107"/><use href="#g95" x="209" y="107"/><use href="#g67" x="216" y="107"/><use href="#g79" x="224" y="107"/><use href="#g76" x="232" y="107"/><use href="#g79" x="239" y="107"/><use href="#g82" x="247" y="107"/><use href="#g95" x="255" y="107"/><use href="#g78" x="262" y="107"/><use href="#g79" x="270" y="107"/><use href="#g82" x="278" y="107"/><use href="#g77" x="286" y="107"/><use href="#g65" x="295" y="107"/><use href="#g76" x="303" y="107"/></g><g fill="#d86f36"><use href="#g84" x="178" y="139"/><use href="#g69" x="186" y="139"/><use href="#g88" x="193" y="139"/><use href="#g84" x="201" y="139"/><use href="#g95" x="209" y="139"/><use href="#g67" x="216" y="139"/><use href="#g79" x="224" y="139"/><use href="#g76" x="232" y="139"/><use href="#g79" x="239" y="139"/><use href="#g82" x="247" y="139"/><use href="#g95" x="255" y="139"/><use href="#g78" x="262" y="139"/><use href="#g79" x="270" y="139"/><use href="#g82" x="278" y="139"/><use href="#g77" x="286" y="139"/><use href="#g65" x="295" y="139"/><use href="#g76" x="303" y="139"/></g><g fill="#51bfd3"><use href="#g66" x="167" y="171"/><use href="#g79" x="175" y="171"/><use href="#g82" x="183" y="171"/><use href="#g68" x="191" y="171"/><use href="#g69" x="199" y="171"/><use href="#g82" x="206" y="171"/><use href="#g95" x="214" y="171"/><use href="#g67" x="221" y="171"/><use href="#g79" x="229" y="171"/><use href="#g76" x="237" y="171"/><use href="#g79" x="244" y="171"/><use href="#g82" x="252" y="171"/><use href="#g95" x="260" y="171"/><use href="#g70" x="267" y="171"/><use href="#g79" x="274" y="171"/><use href="#g67" x="282" y="171"/><use href="#g85" x="290" y="171"/><use href="#g83" x="298" y="171"/><use href="#g69" x="306" y="171"/><use href="#g68" x="313" y="171"/></g><g fill="#51bfd3"><use href="#g66" x="175" y="203"/><use href="#g65" x="183" y="203"/><use href="#g83" x="191" y="203"/><use href="#g69" x="199" y="203"/><use href="#g95" x="206" y="203"/><use href="#g67" x="213" y="203"/><use href="#g79" x="221" y="203"/><use href="#g76" x="229" y="203"/><use href="#g79" x="236" y="203"/><use href="#g82" x="244" y="203"/><use href="#g95" x="252" y="203"/><use href="#g70" x="259" y="203"/><use href="#g79" x="266" y="203"/><use href="#g67" x="274" y="203"/><use href="#g85" x="282" y="203"/><use href="#g83" x="290" y="203"/><use href="#g69" x="298" y="203"/><use href="#g68" x="305" y="203"/></g><g fill="#51bfd3"><use href="#g84" x="175" y="235"/><use href="#g69" x="183" y="235"/><use href="#g88" x="190" y="235"/><use href="#g84" x="198" y="235"/><use href="#g95" x="206" y="235"/><use href="#g67" x="213" y="235"/><use href="#g79" x="221" y="235"/><use href="#g76" x="229" y="235"/><use href="#g79" x="236" y="235"/><use href="#g82" x="244" y="235"/><use href="#g95" x="252" y="235"/><use href="#g70" x="259" y="235"/><use href="#g79" x="266" y="235"/><use href="#g67" x="274" y="235"/><use href="#g85" x="282" y="235"/><use href="#g83" x="290" y="235"/><use href="#g69" x="298" y="235"/><use href="#g68" x="305" y="235"/></g><g fill="#51bfd3"><use href="#g66" x="167" y="267"/><use href="#g79" x="175" y="267"/><use href="#g82" x="183" y="267"/><use href="#g68" x="191" y="267"/><use href="#g69" x="199" y="267"/><use href="#g82" x="206" y="267"/><use href="#g95" x="214" y="267"/><use href="#g67" x="221" y="267"/><use href="#g79" x="229" y="267"/><use href="#g76" x="237" y="267"/><use href="#g79" x="244" y="267"/><use href="#g82" x="252" y="267"/><use href="#g95" x="260" y="267"/><use href="#g80" x="267" y="267"/><use href="#g82" x="275" y="267"/><use href="#g69" x="283" y="267"/><use href="#g83" x="290" y="267"/><use href="#g83" x="298" y="267"/><use href="#g69" x="306" y="267"/><use href="#g68" x="313" y="267"/></g><g fill="#51bfd3"><use href="#g66" x="175" y="299"/><use href="#g65" x="183" y="299"/><use href="#g83" x="191" y="299"/><use href="#g69" x="199" y="299"/><use href="#g95" x="206" y="299"/><use href="#g67" x="213" y="299"/><use href="#g79" x="221" y="299"/><use href="#g76" x="229" y="299"/><use href="#g79" x="236" y="299"/><use href="#g82" x="244" y="299"/><use href="#g95" x="252" y="299"/><use href="#g80" x="259" y="299"/><use href="#g82" x="267" y="299"/><use href="#g69" x="275" y="299"/><use href="#g83" x="282" y="299"/><use href="#g83" x="290" y="299"/><use href="#g69" x="298" y="299"/><use href="#g68" x="305" y="299"/></g><g fill="#51bfd3"><use href="#g84" x="175" y="331"/><use href="#g69" x="183" y="331"/><use href="#g88" x="190" y="331"/><use href="#g84" x="198" y="331"/><use href="#g95" x="206" y="331"/><use href="#g67" x="213" y="331"/><use href="#g79" x="221" y="331"/><use href="#g76" x="229" y="331"/><use href="#g79" x="236" y="331"/><use href="#g82" x="244" y="331"/><use href="#g95" x="252" y="331"/><use href="#g80" x="259" y="331"/><use href="#g82" x="267" y="331"/><use href="#g69" x="275" y="331"/><use href="#g83" x="282" y="331"/><use href="#g83" x="290" y="331"/><use href="#g69" x="298" y="331"/><use href="#g68" x="305" y="331"/></g><g fill="#51bfd3"><use href="#g66" x="164" y="363"/><use href="#g79" x="172" y="363"/><use href="#g82" x="180" y="363"/><use href="#g68" x="188" y="363"/><use href="#g69" x="196" y="363"/><use href="#g82" x="203" y="363"/><use href="#g95" x="211" y="363"/><use href="#g67" x="218" y="363"/><use href="#g79" x="226" y="363"/><use href="#g76" x="234" y="363"/><use href="#g79" x="241" y="363"/><use href="#g82" x="249" y="363"/><use href="#g95" x="257" y="363"/><use href="#g68" x="264" y="363"/><use href="#g73" x="272" y="363"/><use href="#g83" x="278" y="363"/><use href="#g65" x="286" y="363"/><use href="#g66" x="294" y="363"/><use href="#g76" x="302" y="363"/><use href="#g69" x="309" y="363"/><use href="#g68" x="316" y="363"/></g><g fill="#51bfd3"><use href="#g66" x="172" y="395"/><use href="#g65" x="180" y="395"/><use href="#g83" x="188" y="395"/><use href="#g69" x="196" y="395"/><use href="#g95" x="203" y="395"/><use href="#g67" x="210" y="395"/><use href="#g79" x="218" y="395"/><use href="#g76" x="226" y="395"/><use href="#g79" x="233" y="395"/><use href="#g82" x="241" y="395"/><use href="#g95" x="249" y="395"/><use href="#g68" x="256" y="395"/><use href="#g73" x="264" y="395"/><use href="#g83" x="270" y="395"/><use href="#g65" x="278" y="395"/><use href="#g66" x="286" y="395"/><use href="#g76" x="294" y="395"/><use href="#g69" x="301" y="395"/><use href="#g68" x="308" y="395"/></g><g fill="#51bfd3"><use href="#g84" x="172" y="427"/><use href="#g69" x="180" y="427"/><use href="#g88" x="187" y="427"/><use href="#g84" x="195" y="427"/><use href="#g95" x="203" y="427"/><use href="#g67" x="210" y="427"/><use href="#g79" x="218" y="427"/><use href="#g76" x="226" y="427"/><use href="#g79" x="233" y="427"/><use href="#g82" x="241" y="427"/><use href="#g95" x="249" y="427"/><use href="#g68" x="256" y="427"/><use href="#g73" x="264" y="427"/><use href="#g83" x="270" y="427"/><use href="#g65" x="278" y="427"/><use href="#g66" x="286" y="427"/><use href="#g76" x="294" y="427"/><use href="#g69" x="301" y="427"/><use href="#g68" x="308" y="427"/></g><g fill="#51bfd3"><use href="#g66" x="197" y="459"/><use href="#g79" x="205" y="459"/><use href="#g82" x="213" y="459"/><use href="#g68" x="221" y="459"/><use href="#g69" x="229" y="459"/><use href="#g82" x="236" y="459"/><use href="#g95" x="244" y="459"/><use href="#g87" x="251" y="459"/><use href="#g73" x="261" y="459"/><use href="#g68" x="267" y="459"/><use href="#g84" x="275" y="459"/><use href="#g72" x="283" y="459"/></g><g fill="#51bfd3"><use href="#g84" x="198" y="491"/><use href="#g69" x="206" y="491"/><use href="#g88" x="213" y="491"/><use href="#g84" x="221" y="491"/><use href="#g95" x="229" y="491"/><use href="#g80" x="236" y="491"/><use href="#g65" x="244" y="491"/><use href="#g68" x="252" y="491"/><use href="#g68" x="260" y="491"/><use href="#g73" x="268" y="491"/><use href="#g78" x="274" y="491"/><use href="#g71" x="282" y="491"/></g><g fill="#51bfd3"><use href="#g84" x="191" y="523"/><use href="#g69" x="199" y="523"/><use href="#g88" x="206" y="523"/><use href="#g84" x="214" y="523"/><use href="#g95" x="222" y="523"/><use href="#g65" x="229" y="523"/><use href="#g76" x="237" y="523"/><use href="#g73" x="244" y="523"/><use href="#g71" x="250" y="523"/><use href="#g78" x="258" y="523"/><use href="#g77" x="266" y="523"/><use href="#g69" x="275" y="523"/><use href="#g78" x="282" y="523"/><use href="#g84" x="290" y="523"/></g><g fill="#51bfd3"><use href="#g83" x="376" y="69"/><use href="#g97" x="384" y="69"/><use href="#g109" x="391" y="69"/><use href="#g112" x="401" y="69"/><use href="#g108" x="408" y="69"/><use href="#g101" x="412" y="69"/><use href="#g114" x="423" y="69"/><use href="#g97" x="429" y="69"/><use href="#g121" x="436" y="69"/><use href="#g103" x="443" y="69"/><use href="#g117" x="450" y="69"/><use href="#g105" x="457" y="69"/><use href="#g99" x="463" y="69"/><use href="#g111" x="470" y="69"/><use href="#g110" x="477" y="69"/><use href="#g116" x="484" y="69"/><use href="#g114" x="490" y="69"/><use href="#g111" x="496" y="69"/><use href="#g108" x="503" y="69"/><use href="#g115" x="507" y="69"/></g><g fill="#51bfd3"><use href="#g80" x="366" y="92"/><use href="#g114" x="374" y="92"/><use href="#g111" x="380" y="92"/><use href="#g112" x="387" y="92"/><use href="#g101" x="394" y="92"/><use href="#g114" x="401" y="92"/><use href="#g116" x="407" y="92"/><use href="#g121" x="413" y="92"/><use href="#g69" x="424" y="92"/><use href="#g100" x="431" y="92"/><use href="#g105" x="438" y="92"/><use href="#g116" x="440" y="92"/><use href="#g111" x="446" y="92"/><use href="#g114" x="453" y="92"/></g><g fill="#17505f"><use href="#g86" x="360" y="114"/><use href="#g97" x="368" y="114"/><use href="#g108" x="375" y="114"/><use href="#g117" x="379" y="114"/><use href="#g101" x="386" y="114"/><use href="#g58" x="393" y="114"/></g><g fill="#17505f"><use href="#g48" x="676" y="115"/></g><g fill="#51bfd3"><use href="#g82" x="661" y="152"/><use href="#g71" x="669" y="152"/><use href="#g66" x="677" y="152"/><use href="#g65" x="685" y="152"/></g><g fill="#51bfd3"><use href="#g82" x="656" y="167"/><use href="#g58" x="664" y="167"/></g><g fill="#51bfd3"><use href="#g48" x="678" y="167"/><use href="#g56" x="686" y="167"/><use href="#g49" x="694" y="167"/></g><g fill="#51bfd3"><use href="#g71" x="656" y="182"/><use href="#g58" x="664" y="182"/></g><g fill="#51bfd3"><use href="#g49" x="678" y="182"/><use href="#g57" x="681" y="182"/><use href="#g49" x="689" y="182"/></g><g fill="#51bfd3"><use href="#g66" x="656" y="197"/><use href="#g58" x="664" y="197"/></g><g fill="#51bfd3"><use href="#g50" x="678" y="197"/><use href="#g49" x="686" y="197"/><use href="#g49" x="689" y="197"/></g><g fill="#51bfd3"><use href="#g72" x="661" y="217"/><use href="#g83" x="669" y="217"/><use href="#g86" x="677" y="217"/></g><g fill="#51bfd3"><use href="#g72" x="656" y="232"/><use href="#g58" x="664" y="232"/></g><g fill="#51bfd3"><use href="#g49" x="674" y="232"/><use href="#g56" x="677" y="232"/><use href="#g57" x="685" y="232"/></g><g fill="#51bfd3"><use href="#g83" x="656" y="247"/><use href="#g58" x="664" y="247"/></g><g fill="#51bfd3"><use href="#g54" x="674" y="247"/><use href="#g50" x="682" y="247"/><use href="#g37" x="690" y="247"/></g><g fill="#51bfd3"><use href="#g86" x="656" y="262"/><use href="#g58" x="664" y="262"/></g><g fill="#51bfd3"><use href="#g56" x="674" y="262"/><use href="#g51" x="682" y="262"/><use href="#g37" x="690" y="262"/></g><g fill="#51bfd3"><use href="#g53" x="656" y="377"/><use href="#g49" x="664" y="377"/><use href="#g66" x="667" y="377"/><use href="#g70" x="675" y="377"/><use href="#g68" x="682" y="377"/><use href="#g51" x="690" y="377"/><use href="#g70" x="698" y="377"/><use href="#g70" x="705" y="377"/></g><g fill="#17505f" clip-path="url(#clipTA)"><use href="#g84" x="366" y="425"/><use href="#g101" x="374" y="425"/><use href="#g120" x="381" y="425"/><use href="#g116" x="388" y="425"/><use href="#g65" x="398" y="425"/><use href="#g108" x="406" y="425"/><use href="#g105" x="410" y="425"/><use href="#g103" x="412" y="425"/><use href="#g110" x="419" y="425"/><use href="#g109" x="426" y="425"/><use href="#g101" x="436" y="425"/><use href="#g110" x="443" y="425"/><use href="#g116" x="450" y="425"/></g><g fill="#17505f"><use href="#g76" x="488" y="425"/><use href="#g69" x="495" y="425"/><use href="#g70" x="502" y="425"/><use href="#g84" x="509" y="425"/></g><g fill="#17505f"><use href="#g67" x="566" y="425"/><use href="#g69" x="574" y="425"/><use href="#g78" x="581" y="425"/><use href="#g84" x="589" y="425"/><use href="#g69" x="597" y="425"/><use href="#g82" x="604" y="425"/></g><g fill="#17505f"><use href="#g82" x="657" y="425"/><use href="#g73" x="665" y="425"/><use href="#g71" x="671" y="425"/><use href="#g72" x="679" y="425"/><use href="#g84" x="687" y="425"/></g><g fill="#51bfd3"><use href="#g70" x="366" y="462"/><use href="#g111" x="373" y="462"/><use href="#g110" x="380" y="462"/><use href="#g116" x="387" y="462"/><use href="#g79" x="397" y="462"/><use href="#g112" x="405" y="462"/><use href="#g116" x="412" y="462"/><use href="#g105" x="418" y="462"/><use href="#g111" x="420" y="462"/><use href="#g110" x="427" y="462"/><use href="#g115" x="434" y="462"/></g><g fill="#51bfd3"><use href="#g76" x="403" y="492"/><use href="#g111" x="410" y="492"/><use href="#g97" x="417" y="492"/><use href="#g100" x="424" y="492"/></g><g fill="#51bfd3"><use href="#g83" x="460" y="492"/><use href="#g105" x="468" y="492"/><use href="#g122" x="470" y="492"/><use href="#g101" x="477" y="492"/><use href="#g58" x="484" y="492"/></g><g fill="#51bfd3"><use href="#g49" x="525" y="492"/><use href="#g52" x="528" y="492"/></g><g fill="#51bfd3"><use href="#g83" x="579" y="492"/><use href="#g112" x="587" y="492"/><use href="#g97" x="594" y="492"/><use href="#g99" x="601" y="492"/><use href="#g105" x="608" y="492"/><use href="#g110" x="610" y="492"/><use href="#g103" x="617" y="492"/><use href="#g58" x="624" y="492"/></g><g fill="#51bfd3"><use href="#g48" x="666" y="492"/></g><g fill="#51bfd3"><use href="#g115" x="371" y="535"/><use href="#g97" x="378" y="535"/><use href="#g109" x="385" y="535"/><use href="#g112" x="395" y="535"/><use href="#g108" x="402" y="535"/><use href="#g101" x="406" y="535"/><use href="#g116" x="417" y="535"/><use href="#g101" x="423" y="535"/><use href="#g120" x="430" y="535"/><use href="#g116" x="437" y="535"/></g><g fill="#51bfd3"><use href="#g84" x="398" y="587"/><use href="#g65" x="406" y="587"/><use href="#g66" x="414" y="587"/><use href="#g76" x="422" y="587"/><use href="#g69" x="429" y="587"/><use href="#g40" x="440" y="587"/><use href="#g46" x="444" y="587"/><use href="#g112" x="446" y="587"/><use href="#g110" x="453" y="587"/><use href="#g103" x="460" y="587"/><use href="#g41" x="467" y="587"/></g><g fill="#51bfd3"><use href="#g52" x="518" y="587"/><use href="#g47" x="526" y="587"/><use href="#g52" x="534" y="587"/></g><g fill="#51bfd3"><use href="#g69" x="607" y="587"/><use href="#g120" x="614" y="587"/><use href="#g112" x="621" y="587"/><use href="#g111" x="628" y="587"/><use href="#g114" x="635" y="587"/><use href="#g116" x="641" y="587"/><use href="#g83" x="651" y="587"/><use href="#g116" x="659" y="587"/><use href="#g121" x="665" y="587"/><use href="#g108" x="672" y="587"/><use href="#g101" x="676" y="587"/></g><g fill="#51bfd3"><use href="#g67" x="161" y="645"/><use href="#g72" x="169" y="645"/><use href="#g65" x="177" y="645"/><use href="#g78" x="185" y="645"/><use href="#g71" x="193" y="645"/><use href="#g69" x="201" y="645"/><use href="#g68" x="208" y="645"/><use href="#g80" x="220" y="645"/><use href="#g82" x="228" y="645"/><use href="#g79" x="236" y="645"/><use href="#g80" x="244" y="645"/><use href="#g69" x="252" y="645"/><use href="#g82" x="259" y="645"/><use href="#g84" x="267" y="645"/><use href="#g73" x="275" y="645"/><use href="#g69" x="281" y="645"/><use href="#g83" x="288" y="645"/><use href="#g58" x="296" y="645"/><use href="#g49" x="302" y="645"/><use href="#g54" x="305" y="645"/></g><g fill="#51bfd3"><use href="#g70" x="346" y="645"/><use href="#g79" x="353" y="645"/><use href="#g78" x="361" y="645"/><use href="#g84" x="369" y="645"/><use href="#g58" x="377" y="645"/><use href="#g115" x="383" y="645"/><use href="#g116" x="390" y="645"/><use href="#g121" x="396" y="645"/><use href="#g108" x="403" y="645"/><use href="#g101" x="407" y="645"/><use href="#g99" x="418" y="645"/><use href="#g117" x="425" y="645"/><use href="#g115" x="432" y="645"/><use href="#g116" x="439" y="645"/><use href="#g111" x="445" y="645"/><use href="#g109" x="452" y="645"/><use href="#g102" x="466" y="645"/><use href="#g111" x="471" y="645"/><use href="#g110" x="478" y="645"/><use href="#g116" x="485" y="645"/><use href="#g40" x="495" y="645"/><use href="#g50" x="499" y="645"/><use href="#g53" x="507" y="645"/><use href="#g54" x="515" y="645"/><use href="#g120" x="527" y="645"/><use href="#g50" x="538" y="645"/><use href="#g53" x="546" y="645"/><use href="#g54" x="554" y="645"/><use href="#g41" x="562" y="645"/><use href="#g45" x="570" y="645"/><use href="#g49" x="579" y="645"/><use href="#g51" x="582" y="645"/><use href="#g49" x="590" y="645"/><use href="#g48" x="593" y="645"/><use href="#g55" x="601" y="645"/><use href="#g50" x="608" y="645"/><use href="#g98" x="620" y="645"/><use href="#g121" x="627" y="645"/><use href="#g116" x="634" y="645"/><use href="#g101" x="640" y="645"/><use href="#g115" x="647" y="645"/></g></svg>
</body></html>
